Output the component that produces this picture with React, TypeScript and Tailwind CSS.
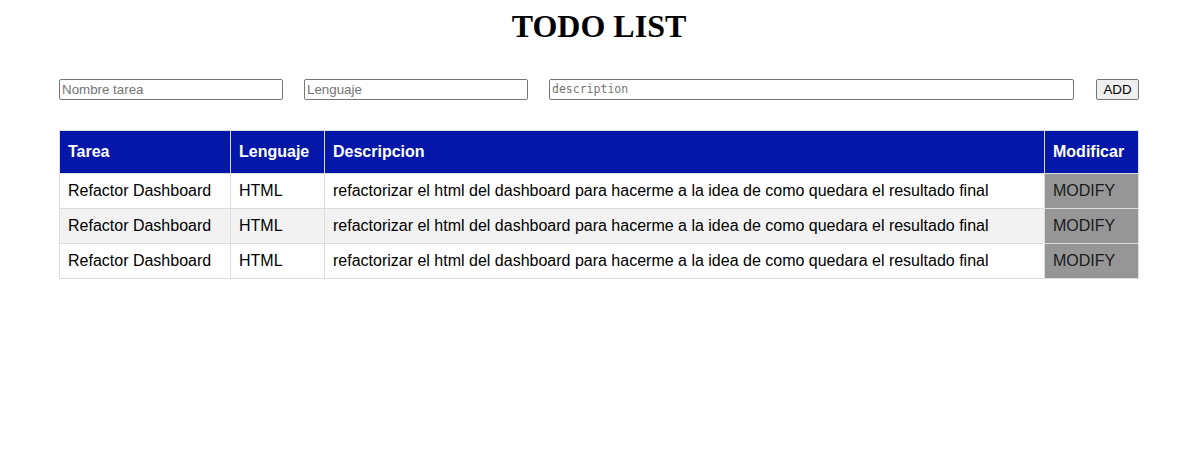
import React from "react";

const rows = [0, 1, 2];

export default function App() {
  return (
    <div className="bg-white min-h-[460px] font-['Liberation_Sans',Arial,sans-serif] text-black">
      <h1 className="pt-2 pl-[15px] text-center text-[32px] font-bold leading-[37px] font-['Liberation_Serif','Times_New_Roman',serif]">
        TODO LIST
      </h1>
      <div className="mt-[34px] ml-[59px] flex items-center">
        <input
          placeholder="Nombre tarea"
          className="w-[224px] h-[21px] border border-[#767676] rounded-[2px] px-[2px] text-[13.33px] placeholder:text-[#757575] font-['Liberation_Sans',Arial,sans-serif]"
        />
        <input
          placeholder="Lenguaje"
          className="ml-[21px] w-[224px] h-[21px] border border-[#767676] rounded-[2px] px-[2px] text-[13.33px] placeholder:text-[#757575] font-['Liberation_Sans',Arial,sans-serif]"
        />
        <textarea
          placeholder="description"
          rows={1}
          className="ml-[21px] w-[525px] h-[21px] border border-[#767676] rounded-[2px] px-[2px] pt-[2px] text-[11.5px] leading-[15px] resize-none overflow-hidden placeholder:text-[#757575] font-['DejaVu_Sans_Mono','Liberation_Mono',monospace]"
        />
        <button className="ml-[22px] w-[43px] h-[21px] bg-[#efefef] border border-[#767676] rounded-[2px] text-[13.33px] leading-none">
          ADD
        </button>
      </div>
      <table className="mt-[30px] ml-[59px] w-[1080px] border-collapse border border-[#dddddd] text-[16px]">
        <thead>
          <tr className="bg-[#0417a9] text-white">
            <th className="w-[171px] border border-[#dddddd] px-2 pt-3 pb-3 text-left font-bold leading-[18px]">Tarea</th>
            <th className="w-[94px] border border-[#dddddd] px-2 pt-3 pb-3 text-left font-bold leading-[18px]">Lenguaje</th>
            <th className="border border-[#dddddd] px-2 pt-3 pb-3 text-left font-bold leading-[18px]">Descripcion</th>
            <th className="w-[94px] border border-[#dddddd] px-2 pt-3 pb-3 text-left font-bold leading-[18px]">Modificar</th>
          </tr>
        </thead>
        <tbody>
          {rows.map((i) => (
            <tr key={i} className={i === 1 ? "bg-[#f2f2f2]" : "bg-white"}>
              <td className="border border-[#dddddd] px-2 py-2 leading-[18px]">Refactor Dashboard</td>
              <td className="border border-[#dddddd] px-2 py-2 leading-[18px]">HTML</td>
              <td className="border border-[#dddddd] px-2 py-2 leading-[18px]">
                refactorizar el html del dashboard para hacerme a la idea de como quedara el resultado final
              </td>
              <td className="border border-[#dddddd] px-2 py-2 leading-[18px] bg-[#969696] text-[#1a1a1a]">MODIFY</td>
            </tr>
          ))}
        </tbody>
      </table>
    </div>
  );
}
